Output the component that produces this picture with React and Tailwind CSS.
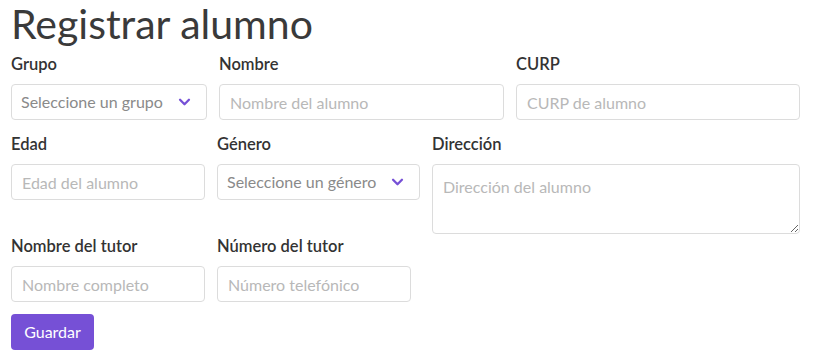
import * as React from 'react';

const font = { fontFamily: 'Lato, "Noto Sans", sans-serif' };

function Chevron() {
  return (
    <svg
      viewBox="0 0 14 9"
      className="pointer-events-none absolute right-[16px] top-1/2 h-[8px] w-[13px] -translate-y-1/2"
      fill="none"
      stroke="#7650d6"
      strokeWidth="2.6"
      strokeLinecap="round"
      strokeLinejoin="round"
    >
      <path d="M2 2l5 5 5-5" />
    </svg>
  );
}

function Field({ label, width, children }) {
  return (
    <div className="flex flex-col" style={{ width }}>
      <label className="mb-[8px] h-[24px] text-[16.5px] leading-[24px] font-semibold text-[#333]">
        {label}
      </label>
      {children}
    </div>
  );
}

function TextInput({ placeholder }) {
  return (
    <input
      type="text"
      placeholder={placeholder}
      className="h-[36px] w-full rounded-[4px] border border-[#dcdcdc] bg-white px-[10px] text-[16px] text-[#555] outline-none placeholder:text-[#b8b8b8]"
    />
  );
}

function SelectBox({ placeholder }) {
  return (
    <div className="relative h-[36px] w-full">
      <select
        defaultValue=""
        className="h-full w-full appearance-none rounded-[4px] border border-[#dcdcdc] bg-white pl-[9px] pr-[36px] text-[16px] text-[#8a8a8a] outline-none"
      >
        <option value="" disabled>
          {placeholder}
        </option>
      </select>
      <Chevron />
    </div>
  );
}

export default function App() {
  return (
    <div className="min-h-screen bg-white px-[11px]" style={font}>
      <h1 className="pt-[2px] text-[41px] leading-[44px] text-[#3a3a3a]">Registrar alumno</h1>

      <div className="mt-[6px] flex items-start gap-[12px]">
        <Field label="Grupo" width={196}>
          <SelectBox placeholder="Seleccione un grupo" />
        </Field>
        <Field label="Nombre" width={285}>
          <TextInput placeholder="Nombre del alumno" />
        </Field>
        <Field label="CURP" width={284}>
          <TextInput placeholder="CURP de alumno" />
        </Field>
      </div>

      <div className="mt-[12px] flex items-start gap-[12px]">
        <Field label="Edad" width={194}>
          <TextInput placeholder="Edad del alumno" />
        </Field>
        <Field label="Género" width={203}>
          <SelectBox placeholder="Seleccione un género" />
        </Field>
        <Field label="Dirección" width={368}>
          <textarea
            placeholder="Dirección del alumno"
            className="block h-[70px] w-full rounded-[4px] border border-[#dcdcdc] bg-white px-[10px] py-[12px] text-[16px] leading-[1.2] text-[#555] outline-none placeholder:text-[#b8b8b8]"
          />
        </Field>
      </div>

      <div className="flex items-start gap-[12px]">
        <Field label="Nombre del tutor" width={194}>
          <TextInput placeholder="Nombre completo" />
        </Field>
        <Field label="Número del tutor" width={194}>
          <TextInput placeholder="Número telefónico" />
        </Field>
      </div>

      <button
        type="button"
        className="mt-[12px] h-[36px] w-[83px] rounded-[4px] bg-[#7650d6] text-[16px] text-white"
      >
        Guardar
      </button>
    </div>
  );
}
